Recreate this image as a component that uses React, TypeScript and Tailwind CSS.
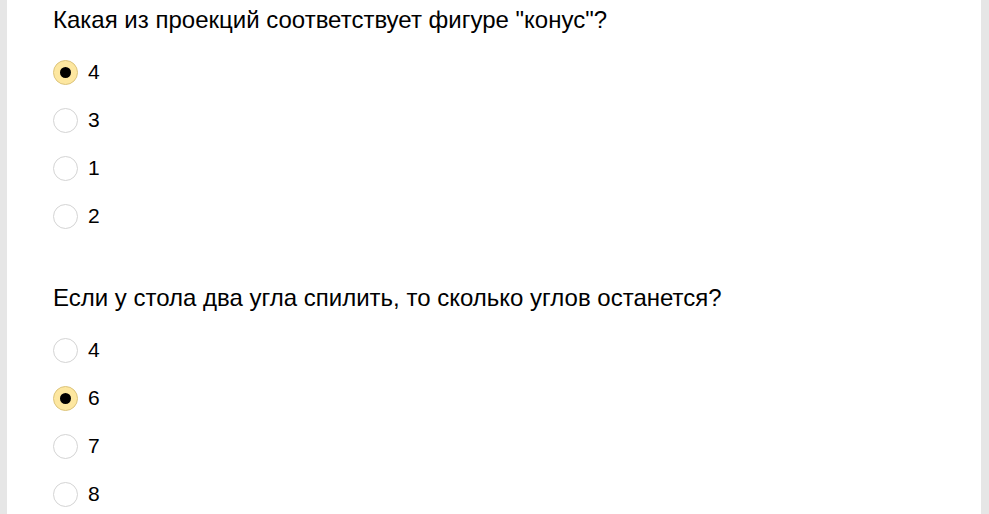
import React from 'react';

interface Question {
  text: string;
  options: string[];
  selected: string;
}

const questions: Question[] = [
  { text: 'Какая из проекций соответствует фигуре "конус"?', options: ['4', '3', '1', '2'], selected: '4' },
  { text: 'Если у стола два угла спилить, то сколько углов останется?', options: ['4', '6', '7', '8'], selected: '6' },
];

const Radio: React.FC<{ checked: boolean }> = ({ checked }) => (
  <span
    className={
      checked
        ? 'w-[25px] h-[25px] rounded-full border border-[#dcc47c] bg-[#fde7a0] flex items-center justify-center shrink-0'
        : 'w-[25px] h-[25px] rounded-full border border-[#d4d4d4] bg-white shrink-0'
    }
  >
    {checked && <span className="w-[11px] h-[11px] rounded-full bg-black" />}
  </span>
);

export default function App() {
  return (
    <div className="w-[989px] h-[514px] bg-[#e6e6e6] flex overflow-hidden font-['Arial','Liberation_Sans',sans-serif] text-black">
      <div className="ml-[7px] w-[974px] h-full bg-white pl-[46px] pt-[6px]">
        {questions.map((q, qi) => (
          <div key={qi} className={qi > 0 ? 'mt-[44px]' : ''}>
            <div className="text-[24px] leading-[28px] mb-[14px]">{q.text}</div>
            {q.options.map((o, oi) => (
              <label key={oi} className="h-[48px] flex items-center gap-[10px] cursor-pointer">
                <Radio checked={o === q.selected} />
                <span className="text-[21px] leading-[24px]">{o}</span>
              </label>
            ))}
          </div>
        ))}
      </div>
    </div>
  );
}
